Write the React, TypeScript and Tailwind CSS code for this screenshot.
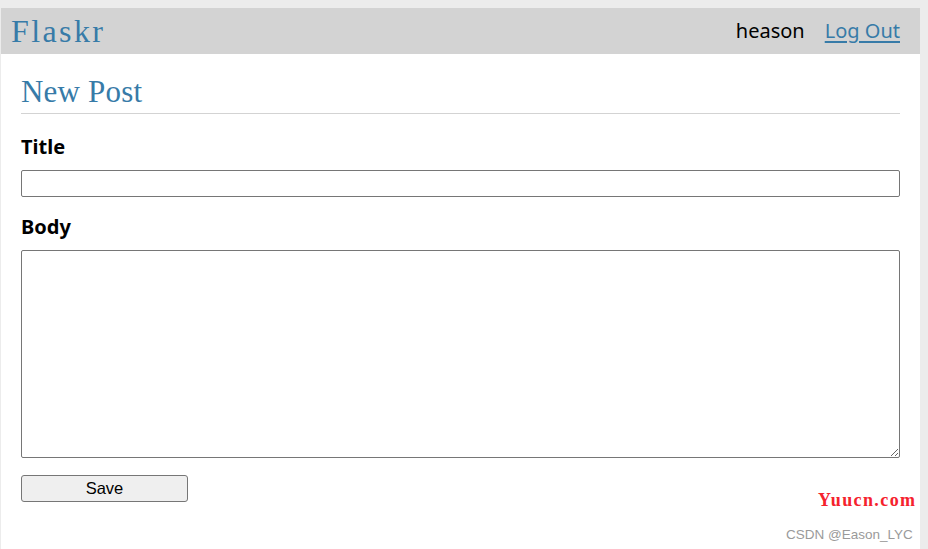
import React, { useState } from "react";

const App: React.FC = () => {
  const [title, setTitle] = useState("");
  const [body, setBody] = useState("");

  return (
    <div className="min-h-[549px] bg-[#ececec] pt-[8px] pl-[1px] pr-[8px]">
      <div className="relative w-[919px] min-h-[541px] bg-white font-['Noto_Sans',sans-serif]">
        {/* nav bar */}
        <nav className="flex items-center h-[46px] bg-[#d3d3d3] pl-[10px] pr-[10px]">
          <h1 className="flex-auto">
            <a
              href="#"
              className="font-['Liberation_Serif',serif] text-[32px] tracking-[2.4px] leading-[46px] text-[#377ba8] no-underline"
            >
              Flaskr
            </a>
          </h1>
          <ul className="flex text-[20px] leading-[26px]">
            <li>
              <span className="block p-[10px] text-black">heason</span>
            </li>
            <li>
              <a href="#" className="block p-[10px] text-[#377ba8] underline underline-offset-[3px]">
                Log Out
              </a>
            </li>
          </ul>
        </nav>

        {/* content */}
        <section className="px-[20px] pb-[20px]">
          <header className="flex items-end border-b border-[#d3d3d3]">
            <h1 className="flex-auto mt-[20px] mb-[4px] font-['Liberation_Serif',serif] text-[31px] tracking-[0.2px] leading-[35px] text-[#377ba8]">
              New Post
            </h1>
          </header>

          <form className="flex flex-col my-[20px]" onSubmit={(e) => e.preventDefault()}>
            <label htmlFor="title" className="font-bold text-[20px] leading-[26px] mb-[10px] text-black">
              Title
            </label>
            <input
              id="title"
              value={title}
              onChange={(e) => setTitle(e.target.value)}
              className="h-[27px] mb-[17px] border border-[#767676] rounded-[2px] px-[3px] text-[16px]"
            />
            <label htmlFor="body" className="font-bold text-[20px] leading-[26px] mb-[10px] text-black">
              Body
            </label>
            <textarea
              id="body"
              value={body}
              onChange={(e) => setBody(e.target.value)}
              className="h-[208px] mb-[17px] border border-[#767676] rounded-[2px] resize-y p-[3px] text-[16px]"
            />
            <button
              type="submit"
              className="self-start w-[167px] h-[27px] bg-[#efefef] border border-[#767676] rounded-[3px] font-['Liberation_Sans',Arial,sans-serif] text-[16.5px] leading-[25px] text-black"
            >
              Save
            </button>
          </form>
        </section>

        {/* watermarks */}
        <span className="absolute left-[817px] top-[479px] font-['Liberation_Serif',serif] font-bold text-[18px] tracking-[1.4px] text-[#f5222d]">
          Yuucn.com
        </span>
        <span className="absolute left-[785px] top-[517px] font-['Liberation_Sans',Arial,sans-serif] text-[13.5px] text-[#9a9a9a]">
          CSDN @Eason_LYC
        </span>
      </div>
    </div>
  );
};

export default App;
